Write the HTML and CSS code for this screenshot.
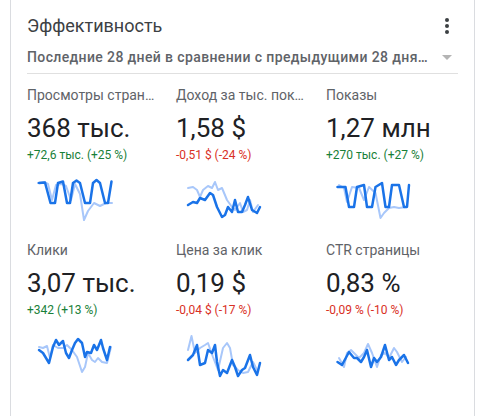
FILE: index.html
```html
<!DOCTYPE html>
<html lang="ru">
<head>
  <meta charset="UTF-8" />
  <meta name="viewport" content="width=device-width, initial-scale=1" />
  <title>Эффективность</title>
  <link rel="stylesheet" href="styles.css">
</head>
<body>
  <div class="card">
    <div class="card-header">
      <h2 class="card-title">Эффективность</h2>
      <svg class="icon-btn" width="24" height="24" viewBox="0 0 24 24">
        <circle cx="12" cy="6" r="2" />
        <circle cx="12" cy="12" r="2" />
        <circle cx="12" cy="18" r="2" />
      </svg>
    </div>

    <div class="period">
      <span class="period-text">Последние 28 дней в сравнении с предыдущими 28 дня…</span>
      <svg class="period-arrow" width="24" height="24" viewBox="0 0 24 24">
        <path d="M7 10l5 5 5-5z" />
      </svg>
    </div>

    <div class="metrics">
      <div class="metric">
        <div class="metric-label">Просмотры стран…</div>
        <div class="metric-value">368 тыс.</div>
        <div class="metric-change up">+72,6 тыс. (+25 %)</div>
        <svg class="spark" width="76" height="46" viewBox="0 0 76 46">
          <polyline class="prev" points="0,7 6,6 10,8 14,24 18,9 24,8 28,10 33,24 37,8 42,18 46,44 50,35 56,27 62,30 68,27 74,27" />
          <polyline class="cur" points="1,7 7,6.5 12.5,27 17,27 20,7 25,5.5 29,27 32,27 35,7 38.5,4.5 42,7 47,27 52,27 55,7 58.5,4 62,7 67,27 70,27 73.5,5.5" />
        </svg>
      </div>

      <div class="metric">
        <div class="metric-label">Доход за тыс. пок…</div>
        <div class="metric-value">1,58 $</div>
        <div class="metric-change down">-0,51 $ (-24 %)</div>
        <svg class="spark" width="76" height="46" viewBox="0 0 76 46">
          <polyline class="prev" points="1,12 6,11 10,14 13,21 16,14 21,10 25,12 28,6 31,14 35,12 40,24 45,31 48,34 53,27 56,36 60,34 63,24 66,36 71,29" />
          <polyline class="cur" points="1,29 6,26 10,27 13,22 18,24 23,17 26,19 30,31 35,41 38,39 41,31 45,36 48,24 51,36 55,36 58,29 61,21 65,34 70,37 73,31" />
        </svg>
      </div>

      <div class="metric">
        <div class="metric-label">Показы</div>
        <div class="metric-value">1,27 млн</div>
        <div class="metric-change up">+270 тыс. (+27 %)</div>
        <svg class="spark" width="76" height="46" viewBox="0 0 76 46">
          <polyline class="prev" points="2,9 7,12 10,26 15,11 22,12 27,24 32,11 38.5,17 43.5,42 47,37 52,32 57,31 62,32 69,31" />
          <polyline class="cur" points="0.5,11 8.5,11 12,31 17,31 20,11 27,9 30,31 35,31 38.5,11 45,7 48.5,31 52,31 55,9 62,9 67,31 70,31 72,9" />
        </svg>
      </div>

      <div class="metric">
        <div class="metric-label">Клики</div>
        <div class="metric-value">3,07 тыс.</div>
        <div class="metric-change up">+342 (+13 %)</div>
        <svg class="spark" width="76" height="46" viewBox="0 0 76 46">
          <polyline class="prev" points="1,16 5,17 9,15 12,27 15,14 20,17 25,17 29,14 34,19 39,26 44,41 47,36 50,22 54,29 57,31 60,27 64,31 69,32 73,16" />
          <polyline class="cur" points="1,19 5,22 11,32 15,16 18,9 21,14 25,10 28,22 31,27 34,19 37,12 40,8 44,12 47,26 49,21 53,22 56,14 59,19 63,9 65,17 69,29 72,16" />
        </svg>
      </div>

      <div class="metric">
        <div class="metric-label">Цена за клик</div>
        <div class="metric-value">0,19 $</div>
        <div class="metric-change down">-0,04 $ (-17 %)</div>
        <svg class="spark" width="76" height="46" viewBox="0 0 76 46">
          <polyline class="prev" points="1,19 4.5,5 8,22 13,17 18,14 21,12 26,26 31,39 36,17 40,12 43,17 46,34 51,39 56,42 61,41 66,31 70,39" />
          <polyline class="cur" points="1,29 6,24 10,14 13,34 18,32 21,19 25,22 28,14 30,31 33,45 36,39 40,42 45,29 48,36 51,45 55,39 58,37 63,24 66,36 70,44 73,32" />
        </svg>
      </div>

      <div class="metric">
        <div class="metric-label">CTR страницы</div>
        <div class="metric-value">0,83 %</div>
        <div class="metric-change down">-0,09 % (-10 %)</div>
        <svg class="spark" width="76" height="46" viewBox="0 0 76 46">
          <polyline class="prev" points="2,27 7,36 10,22 14,19 19,24 22,27 27,22 31,13 35,22 40,36 44,24 48,22 52,27 57,17 60,21 65,31 69,26" />
          <polyline class="cur" points="0.5,31 5,34 12,21 17,27 20,27 24,31 27,26 30,19 34,36 37,27 40,31 44,26 48,14 52,29 55,26 59,34 62,29 67,24 71,32" />
        </svg>
      </div>
    </div>
  </div>
</body>
</html>
```

FILE: styles.css
```css
body {
  margin: 0;
  background: #fff;
  font-family: Roboto, "Noto Sans", sans-serif;
  color: #202124;
}

.card {
  box-sizing: border-box;
  width: 465px;
  margin: -1px 0 0 10px;
  padding: 14px 16px 39px 16px;
  border: 1px solid #dadce0;
  background: #fff;
}

.card-header {
  display: flex;
  align-items: center;
  justify-content: space-between;
  height: 24px;
}

.card-title {
  margin: 0;
  font-size: 18px;
  font-weight: 400;
  line-height: 24px;
  color: #3c4043;
}

.icon-btn {
  fill: #3c4043;
  margin-right: -1px;
}

.period {
  display: flex;
  align-items: center;
  justify-content: space-between;
  margin-top: 9px;
  padding-bottom: 6px;
  border-bottom: 1px solid #e0e0e0;
  height: 20px;
}

.period-text {
  font-size: 14px;
  font-weight: 500;
  line-height: 20px;
  letter-spacing: 0.38px;
  color: #5f6368;
  white-space: nowrap;
  overflow: hidden;
}

.period-arrow {
  fill: #b4b4b4;
  margin-right: -1px;
  flex-shrink: 0;
}

.metrics {
  display: grid;
  grid-template-columns: 149px 150px 1fr;
  row-gap: 18px;
  padding-top: 11px;
}

.metric-label {
  font-size: 14px;
  line-height: 20px;
  color: #5f6368;
  white-space: nowrap;
}

.metric-value {
  margin-top: 7px;
  font-size: 26px;
  line-height: 32px;
  color: #202124;
  white-space: nowrap;
}

.metric-change {
  margin-top: 3px;
  font-size: 12px;
  line-height: 16px;
}

.metric-change.up {
  color: #188038;
}

.metric-change.down {
  color: #d93025;
}

.spark {
  display: block;
  margin: 13px 0 0 11px;
  overflow: visible;
}

.spark polyline {
  fill: none;
  stroke-linejoin: round;
  stroke-linecap: round;
}

.spark .prev {
  stroke: #a8c7fa;
  stroke-width: 2;
}

.spark .cur {
  stroke: #1a73e8;
  stroke-width: 2.5;
}
```
